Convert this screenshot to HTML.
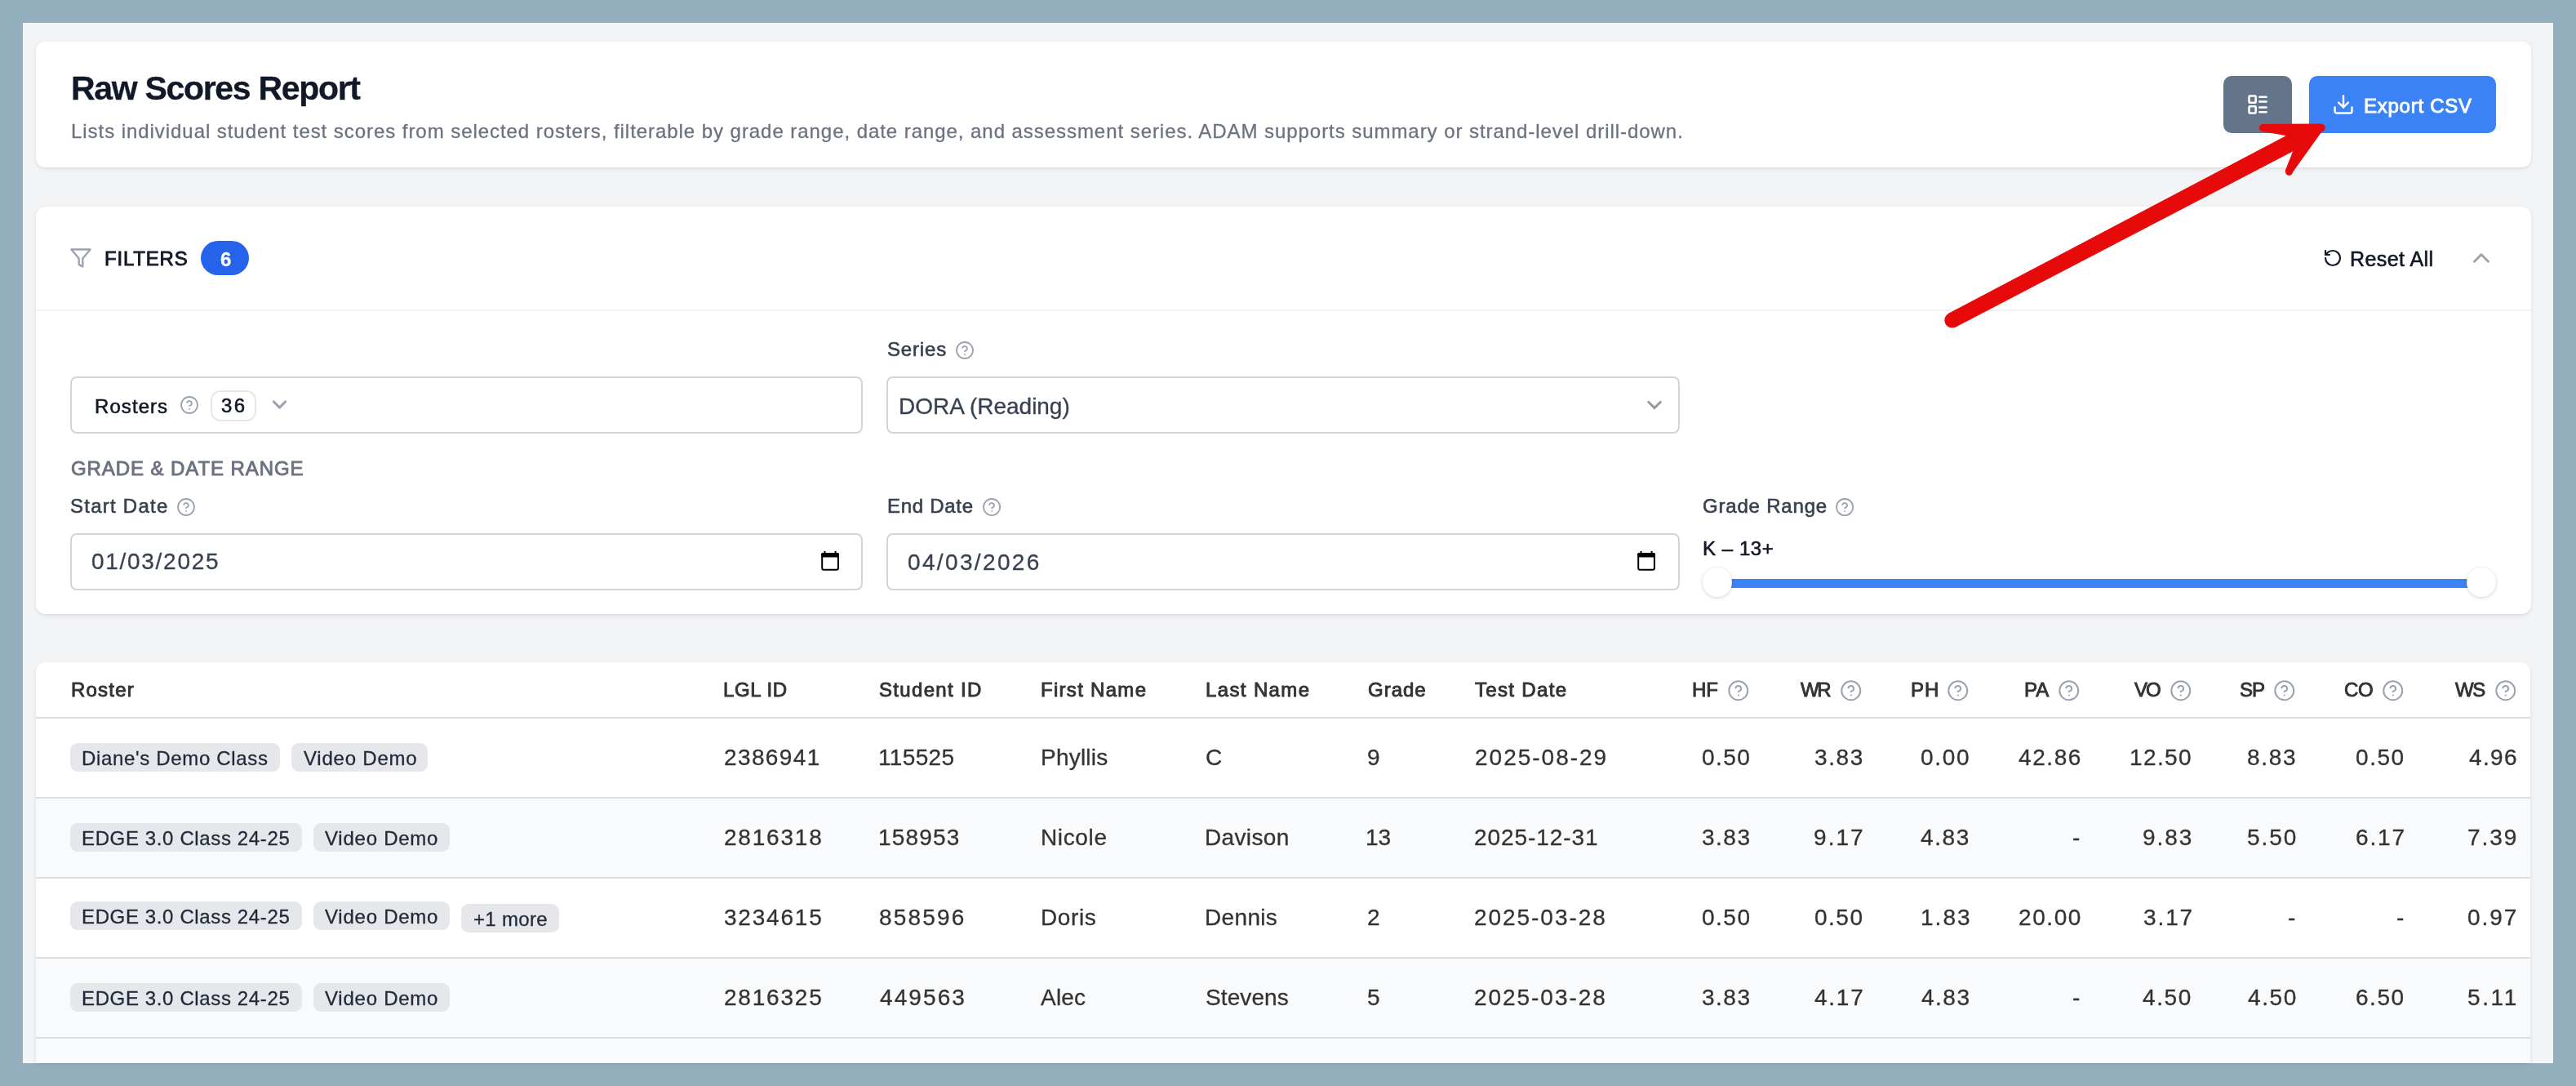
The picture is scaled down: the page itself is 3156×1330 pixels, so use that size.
<!DOCTYPE html>
<html>
<head>
<meta charset="utf-8">
<title>Raw Scores Report</title>
<style>
html,body{margin:0;padding:0;}
body{width:3156px;height:1330px;overflow:hidden;position:relative;background:#94b0be;font-family:"Liberation Sans",sans-serif;}
.page{position:absolute;left:28px;top:28px;width:3100px;height:1274px;background:#f3f4f6;}
.card{position:absolute;background:#fff;border-radius:12px;box-shadow:0 2px 6px rgba(0,0,0,0.075),0 1px 2px rgba(0,0,0,0.05);}
.t{position:absolute;white-space:pre;line-height:1;will-change:transform;-webkit-text-stroke:0.3px currentColor;}
.m{-webkit-text-stroke:0.6px currentColor;}
.sb{-webkit-text-stroke:0.9px currentColor;}
.b{font-weight:700;}
.ic{position:absolute;}
.box{position:absolute;border:2px solid #d1d5db;border-radius:8px;box-sizing:border-box;background:#fff;}
.chip{position:absolute;background:#e5e7eb;border-radius:9px;height:35px;}
</style>
</head>
<body>
<div class="page"></div>
<div class="card" style="left:44px;top:51px;width:3057px;height:154px;border-radius:11px;"></div>
<div id="title" class="t b" style="left:86.80px;top:88.09px;font-size:41px;color:#111827;letter-spacing:-1.310px;">Raw Scores Report</div>
<div id="subtitle" class="t " style="left:87.00px;top:148.58px;font-size:24px;color:#6b7280;letter-spacing:0.945px;">Lists individual student test scores from selected rosters, filterable by grade range, date range, and assessment series. ADAM supports summary or strand-level drill-down.</div>
<div style="position:absolute;left:2724px;top:93px;width:84px;height:70px;background:#64748b;border-radius:10px;"></div>
<svg class="ic" style="left:2752px;top:114px" width="28" height="28" viewBox="0 0 24 24" fill="none" stroke="#fff" stroke-width="2.2" stroke-linecap="round" stroke-linejoin="round"><rect x="3" y="3" width="7" height="7" rx="0.8"/><rect x="3" y="14" width="7" height="7" rx="0.8"/><path d="M14 4h7M14 9h7M14 15h7M14 20h7"/></svg>
<div style="position:absolute;left:2829px;top:93px;width:229px;height:70px;background:#3b82f6;border-radius:10px;"></div>
<svg class="ic" style="left:2857px;top:114px" width="28" height="28" viewBox="0 0 24 24" fill="none" stroke="#fff" stroke-width="2.1" stroke-linecap="round" stroke-linejoin="round"><path d="M21 15v4a2 2 0 0 1-2 2H5a2 2 0 0 1-2-2v-4"/><polyline points="7 10 12 15 17 10"/><line x1="12" y1="15" x2="12" y2="3"/></svg>
<div id="export" class="t sb" style="left:2896.00px;top:117.68px;font-size:24px;color:#fff;letter-spacing:0.744px;">Export CSV</div>
<div class="card" style="left:44px;top:253px;width:3057px;height:499px;"></div>
<div style="position:absolute;left:44px;top:379px;width:3057px;height:2px;background:#f1f2f4;"></div>
<svg class="ic" style="left:85px;top:302px" width="28" height="28" viewBox="0 0 24 24" fill="none" stroke="#9ca3af" stroke-width="2" stroke-linecap="round" stroke-linejoin="round"><polygon points="22 3 2 3 10 12.46 10 19 14 21 14 12.46 22 3"/></svg>
<div id="filters" class="t sb" style="left:128.20px;top:305.48px;font-size:24px;color:#111827;letter-spacing:0.802px;">FILTERS</div>
<div style="position:absolute;left:246px;top:295px;width:59px;height:42px;background:#2563eb;border-radius:21px;"></div>
<div id="badge6" class="t b" style="left:270.00px;top:305.88px;font-size:24px;color:#fff;letter-spacing:0.000px;">6</div>
<svg class="ic" style="left:2846px;top:304px" width="24" height="24" viewBox="0 0 24 24" fill="none" stroke="#111827" stroke-width="2.2" stroke-linecap="round" stroke-linejoin="round"><path d="M3 12a9 9 0 1 0 9-9 9.75 9.75 0 0 0-6.74 2.74L3 8"/><path d="M3 3v5h5"/></svg>
<div id="resetall" class="t m" style="left:2878.80px;top:304.84px;font-size:25px;color:#111827;letter-spacing:0.425px;">Reset All</div>
<svg class="ic" style="left:3023px;top:299px" width="34" height="34" viewBox="0 0 24 24" fill="none" stroke="#9ca3af" stroke-width="2" stroke-linecap="round" stroke-linejoin="round"><path d="m18 15-6-6-6 6"/></svg>
<div id="series" class="t m" style="left:1086.60px;top:415.68px;font-size:24px;color:#374151;letter-spacing:0.840px;">Series</div>
<svg class="ic" style="left:1170.20px;top:416.90px" width="24.00" height="24.00" viewBox="0 0 24 24" fill="none" stroke="#9ca3af" stroke-width="1.8" stroke-linecap="round" stroke-linejoin="round"><circle cx="12" cy="12" r="10"/><path d="M9.09 9a3 3 0 0 1 5.83 1c0 2-3 3-3 3"/><path d="M12 17h.01"/></svg>
<div class="box" style="left:86px;top:461px;width:971px;height:70px;"></div>
<div id="rosters" class="t m" style="left:116.00px;top:485.68px;font-size:24px;color:#111827;letter-spacing:1.070px;">Rosters</div>
<svg class="ic" style="left:220.30px;top:483.90px" width="24.00" height="24.00" viewBox="0 0 24 24" fill="none" stroke="#9ca3af" stroke-width="1.8" stroke-linecap="round" stroke-linejoin="round"><circle cx="12" cy="12" r="10"/><path d="M9.09 9a3 3 0 0 1 5.83 1c0 2-3 3-3 3"/><path d="M12 17h.01"/></svg>
<div style="position:absolute;left:258px;top:478px;width:56px;height:38px;border:2px solid #e5e7eb;border-radius:12px;box-sizing:border-box;"></div>
<div id="n36" class="t m" style="left:271.20px;top:485.18px;font-size:24px;color:#111827;letter-spacing:2.500px;">36</div>
<svg class="ic" style="left:328px;top:481px" width="29" height="29" viewBox="0 0 24 24" fill="none" stroke="#9ca3af" stroke-width="2.4" stroke-linecap="round" stroke-linejoin="round"><path d="m6 9 6 6 6-6"/></svg>
<div class="box" style="left:1086px;top:461px;width:972px;height:70px;"></div>
<div id="dora" class="t " style="left:1101.00px;top:484.00px;font-size:28px;color:#374151;letter-spacing:-0.026px;">DORA (Reading)</div>
<svg class="ic" style="left:2013px;top:481px" width="28" height="28" viewBox="0 0 24 24" fill="none" stroke="#9a9a9a" stroke-width="2.6" stroke-linecap="butt" stroke-linejoin="miter"><path d="m5 9 7 7 7-7"/></svg>
<div id="grade" class="t sb" style="left:87.00px;top:561.68px;font-size:24px;color:#6b7280;letter-spacing:0.916px;">GRADE &amp; DATE RANGE</div>
<div id="startdate" class="t m" style="left:86.40px;top:607.68px;font-size:24px;color:#374151;letter-spacing:1.248px;">Start Date</div>
<svg class="ic" style="left:215.90px;top:609.30px" width="24.00" height="24.00" viewBox="0 0 24 24" fill="none" stroke="#9ca3af" stroke-width="1.8" stroke-linecap="round" stroke-linejoin="round"><circle cx="12" cy="12" r="10"/><path d="M9.09 9a3 3 0 0 1 5.83 1c0 2-3 3-3 3"/><path d="M12 17h.01"/></svg>
<div class="box" style="left:86px;top:653px;width:971px;height:70px;"></div>
<div id="date1" class="t " style="left:111.60px;top:674.30px;font-size:28px;color:#374151;letter-spacing:1.711px;">01/03/2025</div>
<svg class="ic" style="left:1004px;top:672px" width="26" height="28" viewBox="0 0 26 28"><rect x="3.2" y="6" width="19.7" height="19.8" rx="2" fill="none" stroke="#000" stroke-width="2"/><rect x="2.2" y="5" width="21.7" height="5.4" rx="1.5" fill="#000"/><rect x="5.5" y="2.9" width="2" height="3" fill="#000"/><rect x="18.6" y="2.9" width="2" height="3" fill="#000"/></svg>
<div id="enddate" class="t m" style="left:1086.60px;top:607.78px;font-size:24px;color:#374151;letter-spacing:0.707px;">End Date</div>
<svg class="ic" style="left:1202.99px;top:609.09px" width="24.11" height="24.11" viewBox="0 0 24 24" fill="none" stroke="#9ca3af" stroke-width="1.8" stroke-linecap="round" stroke-linejoin="round"><circle cx="12" cy="12" r="10"/><path d="M9.09 9a3 3 0 0 1 5.83 1c0 2-3 3-3 3"/><path d="M12 17h.01"/></svg>
<div class="box" style="left:1086px;top:653px;width:972px;height:70px;"></div>
<div id="date2" class="t " style="left:1111.60px;top:674.50px;font-size:28px;color:#374151;letter-spacing:2.358px;">04/03/2026</div>
<svg class="ic" style="left:2004px;top:672px" width="26" height="28" viewBox="0 0 26 28"><rect x="3.2" y="6" width="19.7" height="19.8" rx="2" fill="none" stroke="#000" stroke-width="2"/><rect x="2.2" y="5" width="21.7" height="5.4" rx="1.5" fill="#000"/><rect x="5.5" y="2.9" width="2" height="3" fill="#000"/><rect x="18.6" y="2.9" width="2" height="3" fill="#000"/></svg>
<div id="graderange" class="t m" style="left:2086.40px;top:607.68px;font-size:24px;color:#374151;letter-spacing:0.810px;">Grade Range</div>
<svg class="ic" style="left:2247.89px;top:609.29px" width="24.22" height="24.22" viewBox="0 0 24 24" fill="none" stroke="#9ca3af" stroke-width="1.8" stroke-linecap="round" stroke-linejoin="round"><circle cx="12" cy="12" r="10"/><path d="M9.09 9a3 3 0 0 1 5.83 1c0 2-3 3-3 3"/><path d="M12 17h.01"/></svg>
<div id="k13" class="t m" style="left:2086.00px;top:659.68px;font-size:24px;color:#111827;letter-spacing:0.567px;">K – 13+</div>
<div style="position:absolute;left:2104px;top:709px;width:936px;height:11px;background:#3b82f6;"></div>
<div style="position:absolute;left:2086px;top:695px;width:36px;height:36px;border-radius:50%;background:#fff;box-shadow:0 1px 4px rgba(0,0,0,0.18);"></div>
<div style="position:absolute;left:3022px;top:695px;width:36px;height:36px;border-radius:50%;background:#fff;box-shadow:0 1px 4px rgba(0,0,0,0.18);"></div>
<div class="card" style="left:44px;top:811px;width:3056px;height:491px;overflow:hidden;border-radius:12px 12px 3px 3px;">
<div style="position:absolute;left:0;top:67px;width:100%;height:2px;background:#dcdddf;"></div>
<div style="position:absolute;left:0;top:69px;width:100%;height:96px;background:#fff;"></div>
<div style="position:absolute;left:0;top:165px;width:100%;height:2px;background:#dcdddf;"></div>
<div style="position:absolute;left:0;top:167px;width:100%;height:96px;background:#f9fafb;"></div>
<div style="position:absolute;left:0;top:263px;width:100%;height:2px;background:#dcdddf;"></div>
<div style="position:absolute;left:0;top:265px;width:100%;height:96px;background:#fff;"></div>
<div style="position:absolute;left:0;top:361px;width:100%;height:2px;background:#dcdddf;"></div>
<div style="position:absolute;left:0;top:363px;width:100%;height:96px;background:#f9fafb;"></div>
<div style="position:absolute;left:0;top:459px;width:100%;height:2px;background:#dcdddf;"></div>
<div style="position:absolute;left:0;top:461px;width:100%;height:40px;background:#f9fafb;"></div>
</div>
<div id="h0" class="t sb" style="left:86.60px;top:832.88px;font-size:24px;color:#333;letter-spacing:1.200px;">Roster</div>
<div id="h1" class="t sb" style="left:885.60px;top:832.88px;font-size:24px;color:#333;letter-spacing:0.580px;">LGL ID</div>
<div id="h2" class="t sb" style="left:1077.00px;top:832.88px;font-size:24px;color:#333;letter-spacing:1.329px;">Student ID</div>
<div id="h3" class="t sb" style="left:1275.40px;top:832.88px;font-size:24px;color:#333;letter-spacing:1.294px;">First Name</div>
<div id="h4" class="t sb" style="left:1476.80px;top:832.88px;font-size:24px;color:#333;letter-spacing:1.369px;">Last Name</div>
<div id="h5" class="t sb" style="left:1676.40px;top:832.88px;font-size:24px;color:#333;letter-spacing:1.000px;">Grade</div>
<div id="h6" class="t sb" style="left:1807.00px;top:832.88px;font-size:24px;color:#333;letter-spacing:1.325px;">Test Date</div>
<svg class="ic" style="left:2116.34px;top:832.04px" width="27.52" height="27.52" viewBox="0 0 24 24" fill="none" stroke="#9ca3af" stroke-width="1.8" stroke-linecap="round" stroke-linejoin="round"><circle cx="12" cy="12" r="10"/><path d="M9.09 9a3 3 0 0 1 5.83 1c0 2-3 3-3 3"/><path d="M12 17h.01"/></svg>
<div id="hs0" class="t sb" style="right:1051.00px;text-align:right;top:832.88px;font-size:24px;color:#333;letter-spacing:-0.100px;">HF</div>
<svg class="ic" style="left:2254.24px;top:832.04px" width="27.52" height="27.52" viewBox="0 0 24 24" fill="none" stroke="#9ca3af" stroke-width="1.8" stroke-linecap="round" stroke-linejoin="round"><circle cx="12" cy="12" r="10"/><path d="M9.09 9a3 3 0 0 1 5.83 1c0 2-3 3-3 3"/><path d="M12 17h.01"/></svg>
<div id="hs1" class="t sb" style="right:914.90px;text-align:right;top:832.88px;font-size:24px;color:#333;letter-spacing:-2.300px;">WR</div>
<svg class="ic" style="left:2385.34px;top:832.04px" width="27.52" height="27.52" viewBox="0 0 24 24" fill="none" stroke="#9ca3af" stroke-width="1.8" stroke-linecap="round" stroke-linejoin="round"><circle cx="12" cy="12" r="10"/><path d="M9.09 9a3 3 0 0 1 5.83 1c0 2-3 3-3 3"/><path d="M12 17h.01"/></svg>
<div id="hs2" class="t sb" style="right:780.20px;text-align:right;top:832.88px;font-size:24px;color:#333;letter-spacing:0.900px;">PH</div>
<svg class="ic" style="left:2520.84px;top:832.04px" width="27.52" height="27.52" viewBox="0 0 24 24" fill="none" stroke="#9ca3af" stroke-width="1.8" stroke-linecap="round" stroke-linejoin="round"><circle cx="12" cy="12" r="10"/><path d="M9.09 9a3 3 0 0 1 5.83 1c0 2-3 3-3 3"/><path d="M12 17h.01"/></svg>
<div id="hs3" class="t sb" style="right:645.90px;text-align:right;top:832.88px;font-size:24px;color:#333;letter-spacing:0.100px;">PA</div>
<svg class="ic" style="left:2658.24px;top:832.04px" width="27.52" height="27.52" viewBox="0 0 24 24" fill="none" stroke="#9ca3af" stroke-width="1.8" stroke-linecap="round" stroke-linejoin="round"><circle cx="12" cy="12" r="10"/><path d="M9.09 9a3 3 0 0 1 5.83 1c0 2-3 3-3 3"/><path d="M12 17h.01"/></svg>
<div id="hs4" class="t sb" style="right:510.30px;text-align:right;top:832.88px;font-size:24px;color:#333;letter-spacing:-1.900px;">VO</div>
<svg class="ic" style="left:2785.14px;top:832.04px" width="27.52" height="27.52" viewBox="0 0 24 24" fill="none" stroke="#9ca3af" stroke-width="1.8" stroke-linecap="round" stroke-linejoin="round"><circle cx="12" cy="12" r="10"/><path d="M9.09 9a3 3 0 0 1 5.83 1c0 2-3 3-3 3"/><path d="M12 17h.01"/></svg>
<div id="hs5" class="t sb" style="right:382.60px;text-align:right;top:832.88px;font-size:24px;color:#333;letter-spacing:-1.100px;">SP</div>
<svg class="ic" style="left:2918.44px;top:832.04px" width="27.52" height="27.52" viewBox="0 0 24 24" fill="none" stroke="#9ca3af" stroke-width="1.8" stroke-linecap="round" stroke-linejoin="round"><circle cx="12" cy="12" r="10"/><path d="M9.09 9a3 3 0 0 1 5.83 1c0 2-3 3-3 3"/><path d="M12 17h.01"/></svg>
<div id="hs6" class="t sb" style="right:248.30px;text-align:right;top:832.88px;font-size:24px;color:#333;letter-spacing:-0.300px;">CO</div>
<svg class="ic" style="left:3056.34px;top:832.04px" width="27.52" height="27.52" viewBox="0 0 24 24" fill="none" stroke="#9ca3af" stroke-width="1.8" stroke-linecap="round" stroke-linejoin="round"><circle cx="12" cy="12" r="10"/><path d="M9.09 9a3 3 0 0 1 5.83 1c0 2-3 3-3 3"/><path d="M12 17h.01"/></svg>
<div id="hs7" class="t sb" style="right:112.00px;text-align:right;top:832.88px;font-size:24px;color:#333;letter-spacing:-1.500px;">WS</div>
<div class="chip" style="left:86px;top:910px;width:257px;"></div>
<div id="c0_0" class="t " style="left:100.00px;top:916.68px;font-size:24px;color:#1f2937;letter-spacing:0.663px;">Diane's Demo Class</div>
<div class="chip" style="left:357px;top:910px;width:167px;"></div>
<div id="c0_1" class="t " style="left:372.00px;top:916.68px;font-size:24px;color:#1f2937;letter-spacing:0.780px;">Video Demo</div>
<div id="r0_0" class="t " style="left:886.50px;top:914.00px;font-size:28px;color:#333;letter-spacing:1.384px;">2386941</div>
<div id="r0_1" class="t " style="left:1075.70px;top:914.00px;font-size:28px;color:#333;letter-spacing:0.340px;">115525</div>
<div id="r0_2" class="t " style="left:1274.60px;top:914.00px;font-size:28px;color:#333;letter-spacing:0.216px;">Phyllis</div>
<div id="r0_3" class="t " style="left:1477.00px;top:914.00px;font-size:28px;color:#333;letter-spacing:0.200px;">C</div>
<div id="r0_4" class="t " style="left:1675.00px;top:914.00px;font-size:28px;color:#333;letter-spacing:1.500px;">9</div>
<div id="r0_5" class="t " style="left:1806.70px;top:914.00px;font-size:28px;color:#333;letter-spacing:1.993px;">2025-08-29</div>
<div id="s0_0" class="t " style="right:1010.99px;text-align:right;top:914.00px;font-size:28px;color:#333;letter-spacing:1.401px;">0.50</div>
<div id="s0_1" class="t " style="right:872.16px;text-align:right;top:914.00px;font-size:28px;color:#333;letter-spacing:1.634px;">3.83</div>
<div id="s0_2" class="t " style="right:741.55px;text-align:right;top:914.00px;font-size:28px;color:#333;letter-spacing:1.665px;">0.00</div>
<div id="s0_3" class="t " style="right:604.61px;text-align:right;top:914.00px;font-size:28px;color:#333;letter-spacing:1.575px;">42.86</div>
<div id="s0_4" class="t " style="right:469.50px;text-align:right;top:914.00px;font-size:28px;color:#333;letter-spacing:1.400px;">12.50</div>
<div id="s0_5" class="t " style="right:341.64px;text-align:right;top:914.00px;font-size:28px;color:#333;letter-spacing:1.666px;">8.83</div>
<div id="s0_6" class="t " style="right:209.24px;text-align:right;top:914.00px;font-size:28px;color:#333;letter-spacing:1.566px;">0.50</div>
<div id="s0_7" class="t " style="right:70.88px;text-align:right;top:914.00px;font-size:28px;color:#333;letter-spacing:1.332px;">4.96</div>
<div class="chip" style="left:86px;top:1008px;width:284px;"></div>
<div id="c1_0" class="t " style="left:99.90px;top:1014.68px;font-size:24px;color:#1f2937;letter-spacing:0.632px;">EDGE 3.0 Class 24-25</div>
<div class="chip" style="left:384px;top:1008px;width:167px;"></div>
<div id="c1_1" class="t " style="left:398.30px;top:1014.68px;font-size:24px;color:#1f2937;letter-spacing:0.756px;">Video Demo</div>
<div id="r1_0" class="t " style="left:886.70px;top:1012.00px;font-size:28px;color:#333;letter-spacing:1.799px;">2816318</div>
<div id="r1_1" class="t " style="left:1075.70px;top:1012.00px;font-size:28px;color:#333;letter-spacing:1.160px;">158953</div>
<div id="r1_2" class="t " style="left:1274.60px;top:1012.00px;font-size:28px;color:#333;letter-spacing:0.640px;">Nicole</div>
<div id="r1_3" class="t " style="left:1475.90px;top:1012.00px;font-size:28px;color:#333;letter-spacing:0.352px;">Davison</div>
<div id="r1_4" class="t " style="left:1673.40px;top:1012.00px;font-size:28px;color:#333;letter-spacing:0.000px;">13</div>
<div id="r1_5" class="t " style="left:1805.80px;top:1012.00px;font-size:28px;color:#333;letter-spacing:0.915px;">2025-12-31</div>
<div id="s1_0" class="t " style="right:1011.00px;text-align:right;top:1012.00px;font-size:28px;color:#333;letter-spacing:1.500px;">3.83</div>
<div id="s1_1" class="t " style="right:871.43px;text-align:right;top:1012.00px;font-size:28px;color:#333;letter-spacing:2.067px;">9.17</div>
<div id="s1_2" class="t " style="right:742.11px;text-align:right;top:1012.00px;font-size:28px;color:#333;letter-spacing:1.599px;">4.83</div>
<div id="s1_3" class="t " style="right:606.00px;text-align:right;top:1012.00px;font-size:28px;color:#333;letter-spacing:1.500px;">-</div>
<div id="s1_4" class="t " style="right:469.28px;text-align:right;top:1012.00px;font-size:28px;color:#333;letter-spacing:1.932px;">9.83</div>
<div id="s1_5" class="t " style="right:341.12px;text-align:right;top:1012.00px;font-size:28px;color:#333;letter-spacing:1.968px;">5.50</div>
<div id="s1_6" class="t " style="right:208.32px;text-align:right;top:1012.00px;font-size:28px;color:#333;letter-spacing:1.868px;">6.17</div>
<div id="s1_7" class="t " style="right:70.52px;text-align:right;top:1012.00px;font-size:28px;color:#333;letter-spacing:1.968px;">7.39</div>
<div class="chip" style="left:86px;top:1104px;width:284px;"></div>
<div id="c2_0" class="t " style="left:99.90px;top:1110.68px;font-size:24px;color:#1f2937;letter-spacing:0.632px;">EDGE 3.0 Class 24-25</div>
<div class="chip" style="left:384px;top:1104px;width:167px;"></div>
<div id="c2_1" class="t " style="left:398.30px;top:1110.68px;font-size:24px;color:#1f2937;letter-spacing:0.756px;">Video Demo</div>
<div class="chip" style="left:565px;top:1107px;width:120px;"></div>
<div id="c2_2" class="t " style="left:580.20px;top:1113.68px;font-size:24px;color:#1f2937;letter-spacing:0.331px;">+1 more</div>
<div id="r2_0" class="t " style="left:886.70px;top:1110.00px;font-size:28px;color:#333;letter-spacing:1.799px;">3234615</div>
<div id="r2_1" class="t " style="left:1076.70px;top:1110.00px;font-size:28px;color:#333;letter-spacing:2.200px;">858596</div>
<div id="r2_2" class="t " style="left:1274.60px;top:1110.00px;font-size:28px;color:#333;letter-spacing:0.625px;">Doris</div>
<div id="r2_3" class="t " style="left:1475.90px;top:1110.00px;font-size:28px;color:#333;letter-spacing:0.340px;">Dennis</div>
<div id="r2_4" class="t " style="left:1675.00px;top:1110.00px;font-size:28px;color:#333;letter-spacing:1.500px;">2</div>
<div id="r2_5" class="t " style="left:1805.80px;top:1110.00px;font-size:28px;color:#333;letter-spacing:1.951px;">2025-03-28</div>
<div id="s2_0" class="t " style="right:1011.00px;text-align:right;top:1110.00px;font-size:28px;color:#333;letter-spacing:1.500px;">0.50</div>
<div id="s2_1" class="t " style="right:873.00px;text-align:right;top:1110.00px;font-size:28px;color:#333;letter-spacing:1.500px;">0.50</div>
<div id="s2_2" class="t " style="right:740.69px;text-align:right;top:1110.00px;font-size:28px;color:#333;letter-spacing:2.031px;">1.83</div>
<div id="s2_3" class="t " style="right:605.45px;text-align:right;top:1110.00px;font-size:28px;color:#333;letter-spacing:1.575px;">20.00</div>
<div id="s2_4" class="t " style="right:468.31px;text-align:right;top:1110.00px;font-size:28px;color:#333;letter-spacing:1.899px;">3.17</div>
<div id="s2_5" class="t " style="right:342.00px;text-align:right;top:1110.00px;font-size:28px;color:#333;letter-spacing:1.500px;">-</div>
<div id="s2_6" class="t " style="right:209.00px;text-align:right;top:1110.00px;font-size:28px;color:#333;letter-spacing:1.500px;">-</div>
<div id="s2_7" class="t " style="right:70.52px;text-align:right;top:1110.00px;font-size:28px;color:#333;letter-spacing:1.968px;">0.97</div>
<div class="chip" style="left:86px;top:1204px;width:284px;"></div>
<div id="c3_0" class="t " style="left:99.90px;top:1210.68px;font-size:24px;color:#1f2937;letter-spacing:0.632px;">EDGE 3.0 Class 24-25</div>
<div class="chip" style="left:384px;top:1204px;width:167px;"></div>
<div id="c3_1" class="t " style="left:398.30px;top:1210.68px;font-size:24px;color:#1f2937;letter-spacing:0.756px;">Video Demo</div>
<div id="r3_0" class="t " style="left:886.70px;top:1208.00px;font-size:28px;color:#333;letter-spacing:1.799px;">2816325</div>
<div id="r3_1" class="t " style="left:1077.70px;top:1208.00px;font-size:28px;color:#333;letter-spacing:2.100px;">449563</div>
<div id="r3_2" class="t " style="left:1275.30px;top:1208.00px;font-size:28px;color:#333;letter-spacing:0.200px;">Alec</div>
<div id="r3_3" class="t " style="left:1476.90px;top:1208.00px;font-size:28px;color:#333;letter-spacing:0.098px;">Stevens</div>
<div id="r3_4" class="t " style="left:1675.00px;top:1208.00px;font-size:28px;color:#333;letter-spacing:1.500px;">5</div>
<div id="r3_5" class="t " style="left:1805.80px;top:1208.00px;font-size:28px;color:#333;letter-spacing:1.951px;">2025-03-28</div>
<div id="s3_0" class="t " style="right:1011.00px;text-align:right;top:1208.00px;font-size:28px;color:#333;letter-spacing:1.500px;">3.83</div>
<div id="s3_1" class="t " style="right:871.76px;text-align:right;top:1208.00px;font-size:28px;color:#333;letter-spacing:1.734px;">4.17</div>
<div id="s3_2" class="t " style="right:742.00px;text-align:right;top:1208.00px;font-size:28px;color:#333;letter-spacing:1.500px;">4.83</div>
<div id="s3_3" class="t " style="right:606.00px;text-align:right;top:1208.00px;font-size:28px;color:#333;letter-spacing:1.500px;">-</div>
<div id="s3_4" class="t " style="right:469.61px;text-align:right;top:1208.00px;font-size:28px;color:#333;letter-spacing:1.599px;">4.50</div>
<div id="s3_5" class="t " style="right:341.45px;text-align:right;top:1208.00px;font-size:28px;color:#333;letter-spacing:1.635px;">4.50</div>
<div id="s3_6" class="t " style="right:209.64px;text-align:right;top:1208.00px;font-size:28px;color:#333;letter-spacing:1.536px;">6.50</div>
<div id="s3_7" class="t " style="right:69.85px;text-align:right;top:1208.00px;font-size:28px;color:#333;letter-spacing:2.635px;">5.11</div>
<svg class="ic" style="left:0;top:0" width="3156" height="1330" viewBox="0 0 3156 1330"><g fill="#e60a0a" stroke="#e60a0a" stroke-linejoin="round" stroke-linecap="round"><path d="M2387.3 384.3 L2811.4 161.1 L2820.6 178.9 L2395.7 400.3 Z" stroke-width="1"/><circle cx="2391.5" cy="392.3" r="9.2" stroke="none"/><path d="M2772.5 153.5 L2843.5 153 L2845.5 157.5 L2807.5 210.5 L2801.5 208.5 L2811 184.5 L2802.5 165 L2772.5 159.5 Z" stroke-width="3"/><circle cx="2772.5" cy="156.5" r="4.6" stroke="none"/><circle cx="2844" cy="156.6" r="4.8" stroke="none"/><circle cx="2804.5" cy="210.3" r="4.6" stroke="none"/></g></svg>
</body>
</html>
